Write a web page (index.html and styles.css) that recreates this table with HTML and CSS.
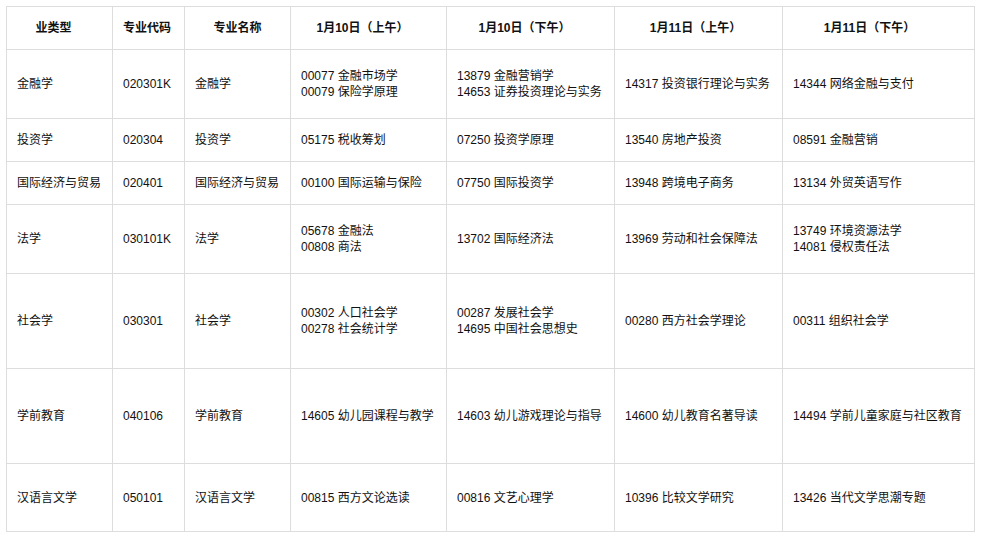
FILE: index.html
```html
<!DOCTYPE html>
<html lang="zh-CN">
<head>
<meta charset="utf-8">
<title>考试安排</title>
<link rel="stylesheet" href="styles.css">
</head>
<body>
<table class="exam">
  <colgroup>
    <col class="c1"><col class="c2"><col class="c3"><col class="c4"><col class="c5"><col class="c6"><col class="c7">
  </colgroup>
  <thead>
    <tr class="h43">
      <th class="s6">业类型</th><th class="s1">专业代码</th><th>专业名称</th><th class="s6">1月10日（上午）</th><th class="s6">1月10日（下午）</th><th class="s3">1月11日（上午）</th><th class="s9">1月11日（下午）</th>
    </tr>
  </thead>
  <tbody>
    <tr class="h69">
      <td>金融学</td><td>020301K</td><td>金融学</td>
      <td>00077 金融市场学<br>00079 保险学原理</td>
      <td>13879 金融营销学<br>14653 证券投资理论与实务</td>
      <td>14317 投资银行理论与实务</td>
      <td>14344 网络金融与支付</td>
    </tr>
    <tr class="h43">
      <td>投资学</td><td>020304</td><td>投资学</td>
      <td>05175 税收筹划</td><td>07250 投资学原理</td><td>13540 房地产投资</td><td>08591 金融营销</td>
    </tr>
    <tr class="h43">
      <td>国际经济与贸易</td><td>020401</td><td>国际经济与贸易</td>
      <td>00100 国际运输与保险</td><td>07750 国际投资学</td><td>13948 跨境电子商务</td><td>13134 外贸英语写作</td>
    </tr>
    <tr class="h69">
      <td>法学</td><td>030101K</td><td>法学</td>
      <td>05678 金融法<br>00808 商法</td>
      <td>13702 国际经济法</td>
      <td>13969 劳动和社会保障法</td>
      <td>13749 环境资源法学<br>14081 侵权责任法</td>
    </tr>
    <tr class="h95">
      <td>社会学</td><td>030301</td><td>社会学</td>
      <td>00302 人口社会学<br>00278 社会统计学</td>
      <td>00287 发展社会学<br>14695 中国社会思想史</td>
      <td>00280 西方社会学理论</td>
      <td>00311 组织社会学</td>
    </tr>
    <tr class="h95">
      <td>学前教育</td><td>040106</td><td>学前教育</td>
      <td>14605 幼儿园课程与教学</td><td>14603 幼儿游戏理论与指导</td><td>14600 幼儿教育名著导读</td><td>14494 学前儿童家庭与社区教育</td>
    </tr>
    <tr class="h68">
      <td>汉语言文学</td><td>050101</td><td>汉语言文学</td>
      <td>00815 西方文论选读</td><td>00816 文艺心理学</td><td>10396 比较文学研究</td><td>13426 当代文学思潮专题</td>
    </tr>
  </tbody>
</table>
</body>
</html>
```

FILE: styles.css
```css
html, body {
  margin: 0;
  background: #ffffff;
}
body {
  padding: 6px;
  font-family: "Liberation Sans", Arial, "Noto Sans CJK SC", sans-serif;
  font-size: 12px;
  line-height: 16px;
  color: #111111;
}
.exam {
  border-collapse: collapse;
  table-layout: fixed;
  width: 968px;
}
.exam th,
.exam td {
  border: 1px solid #dddddd;
  padding: 0 10px;
  vertical-align: middle;
  text-align: left;
  white-space: nowrap;
}
.exam th {
  font-weight: bold;
  text-align: center;
}
.exam th.s1 { padding-right: 13px; }
.exam th.s3 { padding-right: 16px; }
.exam th.s6 { padding-right: 22px; }
.exam th.s9 { padding-right: 28px; }
.c1 { width: 106px; }
.c2 { width: 72px; }
.c3 { width: 106px; }
.c4 { width: 156px; }
.c5 { width: 168px; }
.c6 { width: 168px; }
.c7 { width: 192px; }
.h43 { height: 43px; }
.h69 { height: 69px; }
.h95 { height: 95px; }
.h68 { height: 68px; }
```
